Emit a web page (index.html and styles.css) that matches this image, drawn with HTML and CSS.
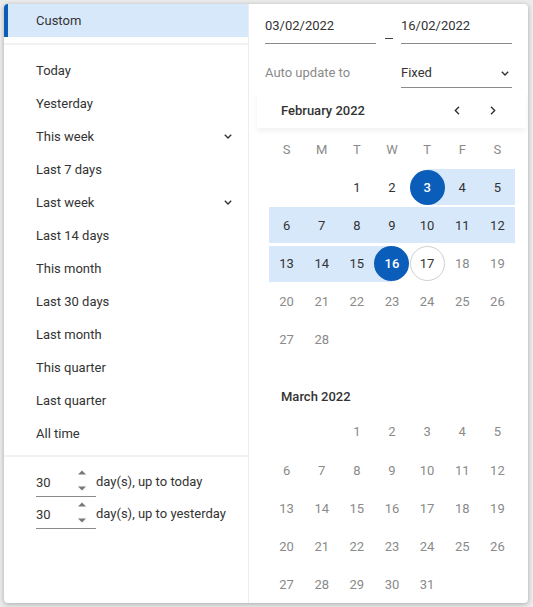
FILE: index.html
```html
<!DOCTYPE html>
<html>
<head>
<meta charset="utf-8">
<link rel="stylesheet" href="styles.css">
</head>
<body>
<div class="popup">
  <div class="presets">
    <div class="custom">Custom</div>
    <ul class="list">
      <li>Today</li>
      <li>Yesterday</li>
      <li>This week <svg class="chev" width="8" height="5" viewBox="0 0 8 5"><path d="M0.8 0.8 L4 4 L7.2 0.8" fill="none" stroke="#333" stroke-width="1.4"/></svg></li>
      <li>Last 7 days</li>
      <li>Last week <svg class="chev" width="8" height="5" viewBox="0 0 8 5"><path d="M0.8 0.8 L4 4 L7.2 0.8" fill="none" stroke="#333" stroke-width="1.4"/></svg></li>
      <li>Last 14 days</li>
      <li>This month</li>
      <li>Last 30 days</li>
      <li>Last month</li>
      <li>This quarter</li>
      <li>Last quarter</li>
      <li>All time</li>
    </ul>
    <div class="rolling">
      <div class="roll-row">
        <div class="num"><span>30</span><svg class="spin" width="8" height="32" viewBox="0 0 8 32"><polygon points="0,9.5 4,5.5 8,9.5" fill="#777"/><polygon points="0,21.5 8,21.5 4,25.5" fill="#777"/></svg></div>
        <span class="roll-label">day(s), up to today</span>
      </div>
      <div class="roll-row">
        <div class="num"><span>30</span><svg class="spin" width="8" height="32" viewBox="0 0 8 32"><polygon points="0,9.5 4,5.5 8,9.5" fill="#777"/><polygon points="0,21.5 8,21.5 4,25.5" fill="#777"/></svg></div>
        <span class="roll-label">day(s), up to yesterday</span>
      </div>
    </div>
  </div>
  <div class="pane">
    <div class="dates">
      <div class="field">03/02/2022</div>
      <div class="dash"><span></span></div>
      <div class="field">16/02/2022</div>
    </div>
    <div class="auto">
      <div class="auto-label">Auto update to</div>
      <div class="sel-field">Fixed <svg width="8" height="5" viewBox="0 0 8 5"><path d="M0.8 0.8 L4 4 L7.2 0.8" fill="none" stroke="#333" stroke-width="1.4"/></svg></div>
    </div>
    <div class="month-head">
      <span class="mtitle">February 2022</span>
      <div class="nav">
        <span class="navbtn"><svg width="6" height="9" viewBox="0 0 6 9"><path d="M5 0.8 L1.3 4.5 L5 8.2" fill="none" stroke="#333" stroke-width="1.4"/></svg></span>
        <span class="navbtn"><svg width="6" height="9" viewBox="0 0 6 9"><path d="M1 0.8 L4.7 4.5 L1 8.2" fill="none" stroke="#333" stroke-width="1.4"/></svg></span>
      </div>
    </div>
    <div class="grid">
      <div class="wd">S</div><div class="wd">M</div><div class="wd">T</div><div class="wd">W</div><div class="wd">T</div><div class="wd">F</div><div class="wd">S</div>
      <div></div><div></div><div class="d">1</div><div class="d">2</div><div class="d start"><span class="sel">3</span></div><div class="d r">4</div><div class="d r">5</div>
      <div class="d r">6</div><div class="d r">7</div><div class="d r">8</div><div class="d r">9</div><div class="d r">10</div><div class="d r">11</div><div class="d r">12</div>
      <div class="d r">13</div><div class="d r">14</div><div class="d r">15</div><div class="d end"><span class="sel">16</span></div><div class="d"><span class="today">17</span></div><div class="d dis">18</div><div class="d dis">19</div>
      <div class="d dis">20</div><div class="d dis">21</div><div class="d dis">22</div><div class="d dis">23</div><div class="d dis">24</div><div class="d dis">25</div><div class="d dis">26</div>
      <div class="d dis">27</div><div class="d dis">28</div>
    </div>
    <div class="month-title">March 2022</div>
    <div class="grid">
      <div></div><div></div><div class="d dis">1</div><div class="d dis">2</div><div class="d dis">3</div><div class="d dis">4</div><div class="d dis">5</div>
      <div class="d dis">6</div><div class="d dis">7</div><div class="d dis">8</div><div class="d dis">9</div><div class="d dis">10</div><div class="d dis">11</div><div class="d dis">12</div>
      <div class="d dis">13</div><div class="d dis">14</div><div class="d dis">15</div><div class="d dis">16</div><div class="d dis">17</div><div class="d dis">18</div><div class="d dis">19</div>
      <div class="d dis">20</div><div class="d dis">21</div><div class="d dis">22</div><div class="d dis">23</div><div class="d dis">24</div><div class="d dis">25</div><div class="d dis">26</div>
      <div class="d dis">27</div><div class="d dis">28</div><div class="d dis">29</div><div class="d dis">30</div><div class="d dis">31</div>
    </div>
  </div>
</div>
</body>
</html>
```

FILE: styles.css
```css
* { box-sizing: border-box; }
html, body { margin: 0; padding: 0; }
body {
  background: #ececec;
  font-family: Roboto, "Liberation Sans", sans-serif;
  font-size: 13px;
  color: #333;
  width: 533px;
  height: 607px;
  overflow: hidden;
}
.popup {
  margin: 4px 0 0 4px;
  width: 524px;
  height: 599px;
  background: #fff;
  border-radius: 4px;
  box-shadow: 0 1px 5px rgba(0,0,0,0.3);
  display: flex;
  overflow: hidden;
}
.presets {
  width: 245px;
  border-right: 1px solid #ededed;
  display: flex;
  flex-direction: column;
}
.custom {
  height: 33px;
  line-height: 33px;
  background: #d7e8fa;
  border-left: 4px solid #0a5db8;
  padding-left: 28px;
  margin-bottom: 6px;
}
.list {
  list-style: none;
  margin: 0;
  padding: 9px 0 5px;
  border-top: 2px solid #f2f2f2;
  border-bottom: 2px solid #f2f2f2;
}
.list li {
  height: 33px;
  padding: 0 16px 0 32px;
  display: flex;
  align-items: center;
  justify-content: space-between;
}
.rolling {
  padding: 8px 0 0 32px;
}
.roll-row {
  display: flex;
  align-items: flex-start;
}
.num {
  width: 60px;
  height: 32px;
  border-bottom: 1px solid #8a8a8a;
  display: flex;
  justify-content: space-between;
  padding: 8px 10px 0 0;
  line-height: 20px;
  position: relative;
}
.spin { position: absolute; right: 10px; top: 0; }
.roll-label {
  line-height: 20px;
  padding-top: 7px;
}
.pane {
  flex: 1;
  display: flex;
  flex-direction: column;
}
.dates, .auto {
  display: flex;
  padding: 0 16px;
}
.dates { margin-top: 10px; }
.field {
  width: 111px;
  height: 30px;
  line-height: 20px;
  padding-top: 2px;
  border-bottom: 1px solid #8a8a8a;
}
.dash {
  width: 25px;
  display: flex;
  justify-content: center;
  padding-top: 24px;
}
.dash span {
  display: block;
  width: 8px;
  height: 1px;
  background: #444;
}
.auto { margin-top: 14px; }
.auto-label {
  width: 136px;
  color: #8a8a8a;
  line-height: 20px;
  padding-top: 5px;
}
.sel-field {
  width: 111px;
  height: 30px;
  line-height: 20px;
  padding: 5px 3px 0 0;
  border-bottom: 1px solid #8a8a8a;
  display: flex;
  justify-content: space-between;
  align-items: flex-start;
}
.sel-field svg { margin-top: 8px; }
.month-head {
  margin: 4px 2px 0 8px;
  height: 36px;
  padding: 0 15px 0 24px;
  display: flex;
  align-items: center;
  justify-content: space-between;
  box-shadow: 0 3px 6px rgba(0,0,0,0.06);
}
.mtitle, .month-title { font-weight: 500; color: #333; }
.nav { display: flex; }
.navbtn {
  width: 36px;
  height: 36px;
  display: flex;
  align-items: center;
  justify-content: center;
}
.grid {
  margin: 3px 13px 0 20px;
  display: grid;
  grid-template-columns: repeat(7, 1fr);
  grid-auto-rows: 36px;
  row-gap: 2.2px;
}
.grid .wd, .grid .d {
  display: flex;
  align-items: center;
  justify-content: center;
}
.wd { color: #8a8a8a; }
.d.dis { color: #8a8a8a; }
.d.r { background: #d7e8fa; }
.d.start { background: linear-gradient(to right, transparent 50%, #d7e8fa 50%); }
.d.end { background: linear-gradient(to right, #d7e8fa 50%, transparent 50%); }
.sel, .today {
  width: 35px;
  height: 35px;
  border-radius: 50%;
  display: flex;
  align-items: center;
  justify-content: center;
}
.sel { background: #0a5db8; color: #fff; font-weight: 500; }
.today { border: 1px solid #cfcfcf; }
.month-title {
  height: 36px;
  line-height: 38px;
  padding-left: 32px;
  margin-top: 20px;
}
.grid + .month-title + .grid { margin-top: 0; }
```
